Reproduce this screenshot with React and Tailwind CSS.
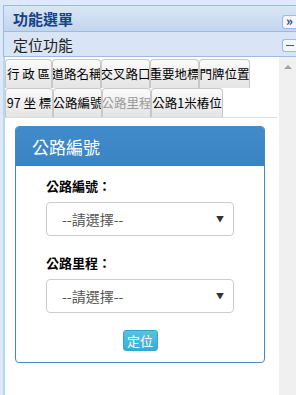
const font = { fontFamily: '"Noto Sans CJK TC", "Noto Sans", sans-serif' };

const row1 = [
  { label: "行 政 區", w: "w-[47px]" },
  { label: "道路名稱", w: "w-[49px]" },
  { label: "交叉路口", w: "w-[49px]" },
  { label: "重要地標", w: "w-[49px]" },
  { label: "門牌位置", w: "w-[51px]" },
];

const row2 = [
  { label: "97 坐 標", w: "w-[48px]" },
  { label: "公路編號", w: "w-[49px]" },
  { label: "公路里程", w: "w-[49px]", dim: true },
  { label: "公路1米樁位", w: "w-[72px]" },
];

// One tab in the wrapped tab strip
const Tab = ({ tab }) => (
  <div
    className={`${tab.w} h-[29px] shrink-0 flex items-center justify-center overflow-hidden whitespace-nowrap rounded-t-[4px] border border-b-0 border-[#c8c8c8] bg-gradient-to-b from-[#fbfbfb] to-[#e4e4e4] text-[12.5px] leading-none ${
      tab.dim ? "text-[#9a9a9a]" : "text-black"
    }`}
  >
    {tab.label}
  </div>
);

// Fake select box, drawn as the picture shows it
const SelectBox = () => (
  <div className="mt-[10px] w-[188px] h-[34px] flex items-center justify-between rounded-[4px] border border-[#cccccc] bg-white pl-[15px] pr-[9px]">
    <span className="text-[14px] text-[#555555]">--請選擇--</span>
    <span className="text-[8px] text-[#333333]">▼</span>
  </div>
);

export default function App() {
  return (
    <div className="w-[296px] h-[395px] overflow-hidden bg-[#dfe8f6] flex flex-col" style={font}>
      <div className="h-[5px] shrink-0" />
      <div className="flex flex-1 min-h-0">
        <div className="w-[3px] shrink-0" />
        <div className="flex-1 flex flex-col border-l border-[#99bbe8] min-h-0">
          {/* accordion header */}
          <div className="h-[27px] shrink-0 flex items-center justify-between border-y border-[#99bbe8] bg-gradient-to-b from-[#dae6f4] to-[#c3d5ed] pl-[9px]">
            <span className="text-[15px] font-bold text-[#15428b] leading-none">功能選單</span>
            <div className="w-[14px] h-[14px] mt-[6px] rounded-l-[3px] border border-r-0 border-[#99bbe8] bg-[#f3f7fc] flex items-center justify-center text-[13px] leading-none text-[#15428b] font-bold pb-[2px]">
              »
            </div>
          </div>
          <div className="h-[25px] shrink-0 flex items-center justify-between border-b border-[#99bbe8] bg-[#d9e5f4] pl-[9px]">
            <span className="text-[15px] text-[#222222] leading-none">定位功能</span>
            <div className="w-[14px] h-[13px] mt-[2px] rounded-l-[3px] border border-r-0 border-[#99bbe8] bg-[#f3f7fc] flex items-center justify-center">
              <div className="w-[8px] h-[1px] bg-[#555555]" />
            </div>
          </div>

          {/* content area */}
          <div className="flex-1 flex min-h-0 bg-white">
            <div className="w-[2px] shrink-0 bg-[#b3dcf4] -ml-px" />
            <div className="flex-1 flex flex-col pt-[2px]">
              <div className="flex flex-col border-b border-[#dddddd] w-[272px]">
                <div className="flex h-[29px]">
                  {row1.map((t) => (
                    <Tab key={t.label} tab={t} />
                  ))}
                </div>
                <div className="flex h-[29px]">
                  {row2.map((t) => (
                    <Tab key={t.label} tab={t} />
                  ))}
                </div>
              </div>

              {/* panel */}
              <div className="ml-[10px] mt-[8px] w-[250px] h-[237px] rounded-[4px] border border-[#428bca] flex flex-col overflow-hidden">
                <div className="h-[39px] shrink-0 bg-gradient-to-b from-[#428bca] to-[#3a84c3] flex items-center pl-[16px]">
                  <span className="text-[17px] text-white leading-none">公路編號</span>
                </div>
                <div className="flex flex-col pl-[30px] pt-[13px]">
                  <span className="text-[13px] font-bold text-black leading-none">公路編號：</span>
                  <SelectBox />
                  <span className="mt-[20px] text-[13px] font-bold text-black leading-none">公路里程：</span>
                  <SelectBox />
                  <div className="w-[188px] flex justify-center mt-[17px]">
                    <button className="w-[35px] h-[21px] rounded-[3px] border border-[#2ea6d0] bg-gradient-to-b from-[#5bc0de] to-[#31b0d5] text-white text-[13px] leading-none">
                      定位
                    </button>
                  </div>
                </div>
              </div>
            </div>
            <div className="w-[17px] shrink-0 bg-[#f0f0f0] flex justify-center pt-[8px]">
              <div className="w-0 h-0 border-l-[4px] border-r-[4px] border-b-[4px] border-l-transparent border-r-transparent border-b-[#a3a3a3]" />
            </div>
          </div>
        </div>
      </div>
    </div>
  );
}
